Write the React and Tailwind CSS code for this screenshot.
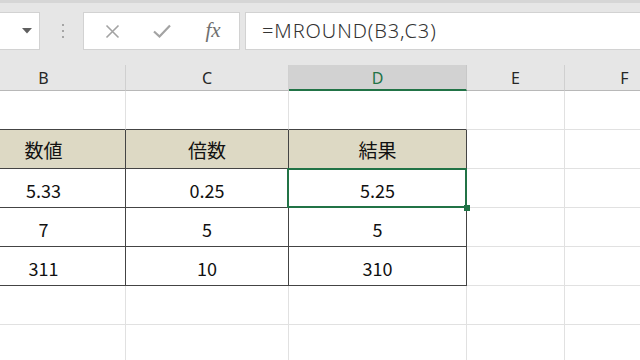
import React from "react";

const cols = [
  { key: "B", w: "w-[164px] -ml-[38px]" },
  { key: "C", w: "w-[163px]" },
  { key: "D", w: "w-[178px]" },
  { key: "E", w: "w-[98px]" },
  { key: "F", w: "w-[120px]" },
];

const rows = [
  { type: "empty", cells: ["", "", "", "", ""], darkBottom: true },
  { type: "head", cells: ["数値", "倍数", "結果", "", ""] },
  { type: "data", cells: ["5.33", "0.25", "5.25", "", ""], selected: 2 },
  { type: "data", cells: ["7", "5", "5", "", ""] },
  { type: "data", cells: ["311", "10", "310", "", ""] },
  { type: "empty", cells: ["", "", "", "", ""] },
  { type: "empty", cells: ["", "", "", "", ""] },
];

function Cell({ col, i, row, text }) {
  const inTable = i < 3;
  const dark = inTable && (row.type !== "empty" || row.darkBottom);
  const bottom = dark ? "border-b-[#444444]" : "border-b-[#e1e1e1]";
  const right =
    inTable && row.type !== "empty"
      ? "border-r-[#444444]"
      : "border-r-[#e1e1e1]";
  const bg = row.type === "head" && inTable ? "bg-[#ddd9c4]" : "bg-white";
  const size = row.type === "head" ? "text-[19px] pt-[2px]" : "text-[18px] pt-[5px]";
  return (
    <div
      className={`relative flex h-full shrink-0 items-center justify-center border-r border-b text-[#111111] ${size} ${col.w} ${bottom} ${right} ${bg}`}
      style={{ fontFamily: '"Noto Sans CJK JP", sans-serif' }}
    >
      {text}
      {row.selected === i && (
        <>
          <div className="absolute -top-[1px] -left-[2px] -right-[1px] -bottom-[1px] z-10 border-2 border-[#217346]" />
          <div className="absolute -right-[4px] -bottom-[4px] z-20 h-[6px] w-[6px] bg-[#217346]" />
        </>
      )}
    </div>
  );
}

export default function App() {
  return (
    <div
      className="h-[360px] w-[640px] overflow-hidden bg-white"
      style={{ fontFamily: '"Noto Sans", "Noto Sans CJK JP", sans-serif' }}
    >
      {/* formula bar */}
      <div className="flex h-[65px] items-start border-t-[3px] border-[#d6d6d6] bg-[#e6e6e6] pt-[9px]">
        <div className="flex h-[38px] w-[40px] items-center justify-end border border-l-0 border-[#d2d2d2] bg-white pr-[7px]">
          <svg width="10" height="6" viewBox="0 0 10 6">
            <path d="M0 0 H10 L5 5.5 Z" fill="#5f5f5f" />
          </svg>
        </div>
        <div className="flex h-[38px] w-[43px] flex-col items-center justify-center gap-[4px] pl-[2px]">
          <div className="h-[2px] w-[2px] bg-[#a5a5a5]" />
          <div className="h-[2px] w-[2px] bg-[#a5a5a5]" />
          <div className="h-[2px] w-[2px] bg-[#a5a5a5]" />
        </div>
        <div className="flex h-[38px] w-[157px] items-center border border-[#d2d2d2] bg-white">
          <div className="flex w-[54px] justify-center pl-[2px]">
            <svg width="15" height="15" viewBox="0 0 15 15">
              <path d="M1.5 1.5 L13.5 13.5 M13.5 1.5 L1.5 13.5" stroke="#a3a3a3" strokeWidth="1.6" />
            </svg>
          </div>
          <div className="flex w-[48px] justify-center">
            <svg width="18" height="14" viewBox="0 0 18 14">
              <path d="M1 7.5 L6.5 12.5 L17 1.5" stroke="#a3a3a3" strokeWidth="2.2" fill="none" />
            </svg>
          </div>
          <div
            className="flex w-[52px] justify-center pl-[2px] text-[21px] italic text-[#707070]"
            style={{ fontFamily: '"Liberation Serif", serif' }}
          >
            fx
          </div>
        </div>
        <div className="ml-[5px] flex h-[38px] flex-1 items-center border border-r-0 border-[#d2d2d2] bg-white pl-[16px] text-[20px] font-light tracking-[0.9px] text-[#333333]">
          =MROUND(B3,C3)
        </div>
      </div>

      {/* column headers */}
      <div className="flex h-[26px] bg-[#e6e6e6]">
        {cols.map((c) => (
          <div
            key={c.key}
            className={`flex h-full shrink-0 items-center justify-center border-r text-[16px] ${c.w} ${
              c.key === "D"
                ? "border-r-[#c8c8c8] border-b-2 border-b-[#217346] bg-[#d2d2d2] pt-[2px] text-[#217346]"
                : "border-r-[#d0d0d0] border-b border-b-[#b8b8b8] text-[#262626]"
            }`}
          >
            {c.key}
          </div>
        ))}
      </div>

      {/* grid */}
      {rows.map((row, r) => (
        <div key={r} className="flex h-[39px]">
          {cols.map((c, i) => (
            <Cell key={c.key} col={c} i={i} row={row} text={row.cells[i]} />
          ))}
        </div>
      ))}
    </div>
  );
}
